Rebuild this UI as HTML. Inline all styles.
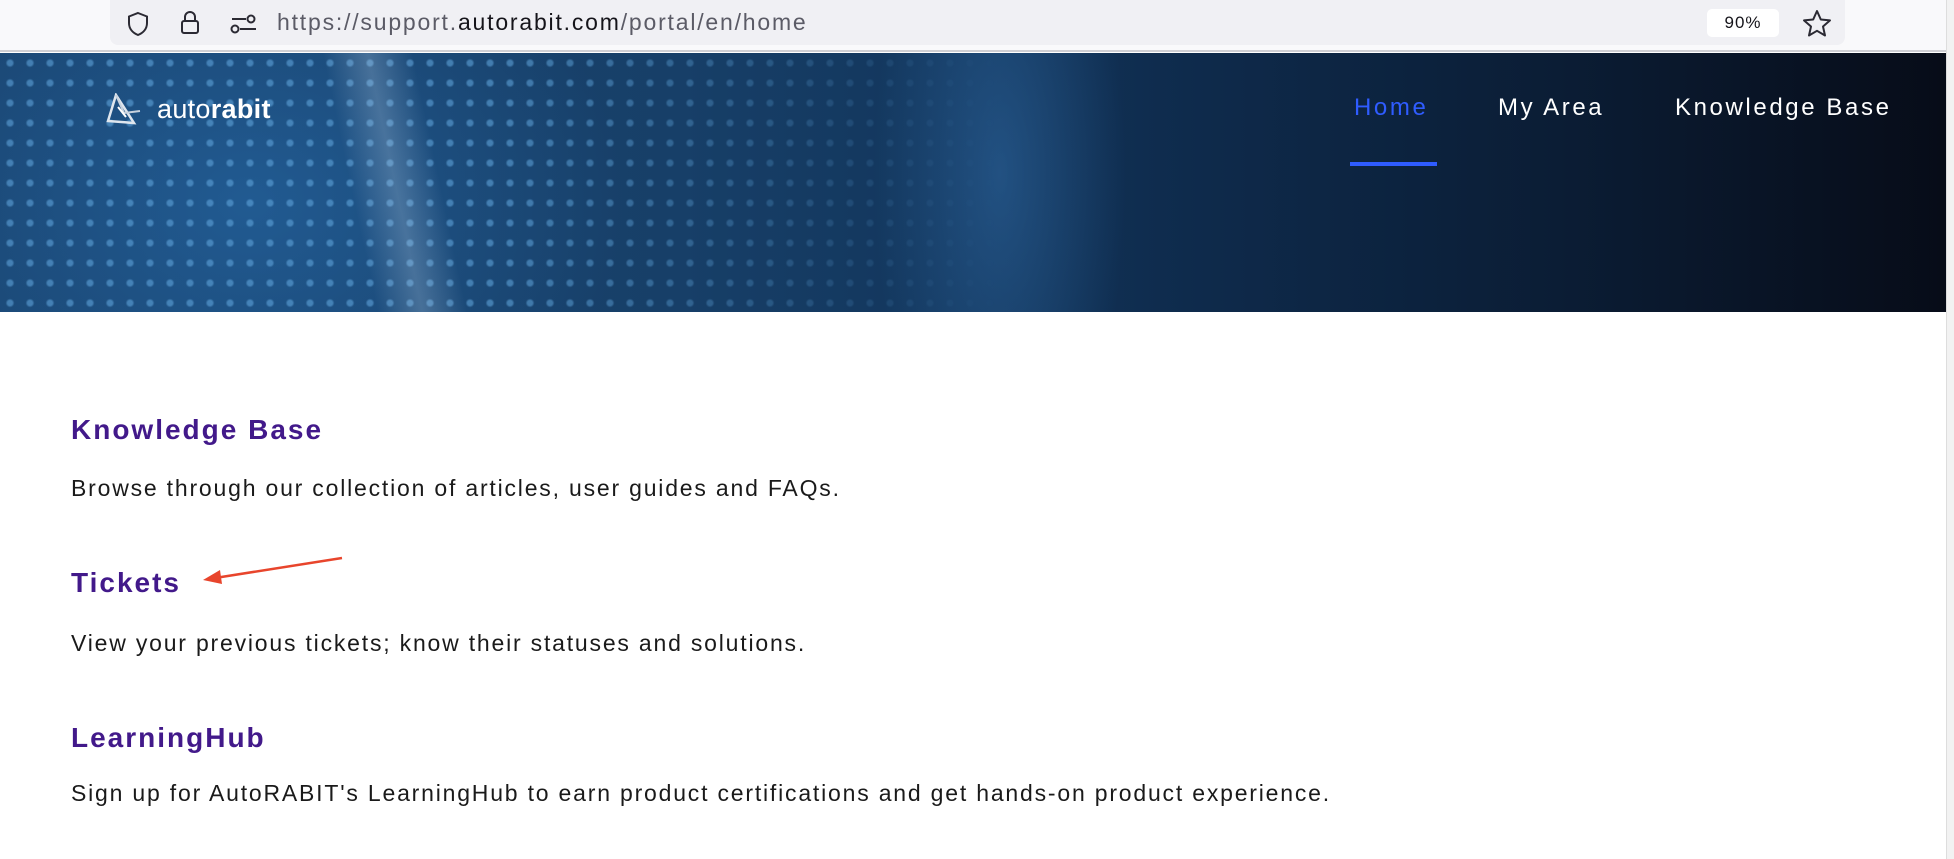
<!DOCTYPE html>
<html><head><meta charset="utf-8"><style>
*{margin:0;padding:0;box-sizing:border-box}
body{width:1954px;height:859px;overflow:hidden;background:#fff;font-family:"Liberation Sans",Arial,sans-serif;position:relative}
.bar{position:absolute;left:0;top:0;width:1946px;height:52px;background:#f9f9fb;border-bottom:2px solid #cfcfd4}
.url{position:absolute;left:110px;top:0;width:1735px;height:45px;background:#f0f0f4;border-radius:0 0 8px 8px}
.urltext{position:absolute;left:277px;top:9px;font-size:23px;color:#5b5b66;letter-spacing:1.8px}
.urltext b{font-weight:normal;color:#15141a}
.badge{position:absolute;left:1707px;top:9px;width:72px;height:28px;background:#fff;border-radius:5px;font-size:17px;text-align:center;line-height:28px;color:#15141a;letter-spacing:1px}
.sb{position:absolute;left:1946px;top:0;width:8px;height:859px;background:#f2f2f2;border-left:1px solid #ddd}
.hdr{position:absolute;left:0;top:53px;width:1946px;height:259px;overflow:hidden;
background:
radial-gradient(ellipse 180px 500px at 1000px 120px,rgba(50,110,170,.5),transparent 70%),
radial-gradient(ellipse 500px 400px at 250px 150px,rgba(40,110,175,.55),transparent 75%),
linear-gradient(90deg,#1a4571 0%,#173f68 35%,#12355b 50%,#0e2a4b 62%,#0b1d35 80%,#070c18 100%)}
.dots{position:absolute;left:0;top:0;width:1000px;height:259px;
background-image:radial-gradient(circle,rgba(100,170,225,.55) 2.5px,transparent 4.5px);
background-size:20px 20px;
-webkit-mask-image:linear-gradient(90deg,#000 0%,#000 50%,transparent 100%);mask-image:linear-gradient(90deg,#000 0%,#000 50%,transparent 100%)}
.streak{position:absolute;left:350px;top:0;width:90px;height:259px;background:linear-gradient(90deg,transparent,rgba(200,220,240,.25),transparent);transform:skewX(12deg)}
.logo{position:absolute;left:157px;top:41px;font-size:27px;color:#fff;letter-spacing:.3px}
.logo b{font-weight:bold}
.nav{position:absolute;top:41px;font-size:24px;color:#fff;letter-spacing:2.6px}
.ul{position:absolute;left:1350px;top:109px;width:87px;height:4px;background:#2f5cff}
h2{position:absolute;left:71px;font-size:28px;font-weight:bold;color:#42198a;letter-spacing:2px}
p{position:absolute;left:71px;font-size:23px;color:#1a1a1a;letter-spacing:1.8px}
</style></head><body>
<div class="bar">
<div class="url"></div>
<svg style="position:absolute;left:126px;top:11px" width="24" height="26" viewBox="0 0 24 26"><path d="M12 2 L21 5.5 V12 C21 18 17 22 12 24 C7 22 3 18 3 12 V5.5 Z" fill="none" stroke="#2b2a33" stroke-width="2"/></svg>
<svg style="position:absolute;left:179px;top:10px" width="22" height="26" viewBox="0 0 22 26"><rect x="3" y="11" width="16" height="12" rx="2" fill="none" stroke="#2b2a33" stroke-width="2"/><path d="M6 11 V7 a5 5 0 0 1 10 0 V11" fill="none" stroke="#2b2a33" stroke-width="2"/></svg>
<svg style="position:absolute;left:230px;top:14px" width="28" height="20" viewBox="0 0 28 20"><path d="M2 5 H16 M10 15 H26" stroke="#2b2a33" stroke-width="2"/><circle cx="21" cy="5" r="3.5" fill="none" stroke="#2b2a33" stroke-width="2"/><circle cx="5" cy="15" r="3.5" fill="none" stroke="#2b2a33" stroke-width="2"/></svg>
<div class="urltext">https://support.<b>autorabit.com</b>/portal/en/home</div>
<div class="badge">90%</div>
<svg style="position:absolute;left:1802px;top:9px" width="30" height="28" viewBox="0 0 30 28"><path d="M15 2 L18.8 10.5 L28 11.4 L21 17.5 L23 26.5 L15 21.8 L7 26.5 L9 17.5 L2 11.4 L11.2 10.5 Z" fill="none" stroke="#2b2a33" stroke-width="2" stroke-linejoin="round"/></svg>
</div>
<div class="sb"></div>
<div class="hdr">
<div class="dots"></div>
<div class="streak"></div>
<svg style="position:absolute;left:104px;top:40px" width="40" height="32" viewBox="0 0 40 32"><path d="M12 2 L4 28 L30 30 Z" fill="none" stroke="#dfe6ee" stroke-width="2.5"/><path d="M12 2 L20 20 L36 18" fill="none" stroke="#c8d2de" stroke-width="2"/><path d="M14 14 L22 24" stroke="#fff" stroke-width="2"/></svg>
<div class="logo">auto<b>rabit</b></div>
<div class="nav" style="left:1354px;color:#2f5cff">Home</div>
<div class="nav" style="left:1498px">My Area</div>
<div class="nav" style="left:1675px">Knowledge Base</div>
<div class="ul"></div>
</div>
<h2 style="top:414px">Knowledge Base</h2>
<p style="top:475px">Browse through our collection of articles, user guides and FAQs.</p>
<h2 style="top:567px">Tickets</h2>
<p style="top:630px">View your previous tickets; know their statuses and solutions.</p>
<h2 style="top:722px">LearningHub</h2>
<p style="top:780px">Sign up for AutoRABIT's LearningHub to earn product certifications and get hands-on product experience.</p>
<svg style="position:absolute;left:195px;top:550px" width="155" height="40" viewBox="0 0 155 40"><path d="M147 8 L20 28" stroke="#e8452c" stroke-width="2.5"/><path d="M8 30 L25 20 L27 34 Z" fill="#e8452c"/></svg>
</body></html>
